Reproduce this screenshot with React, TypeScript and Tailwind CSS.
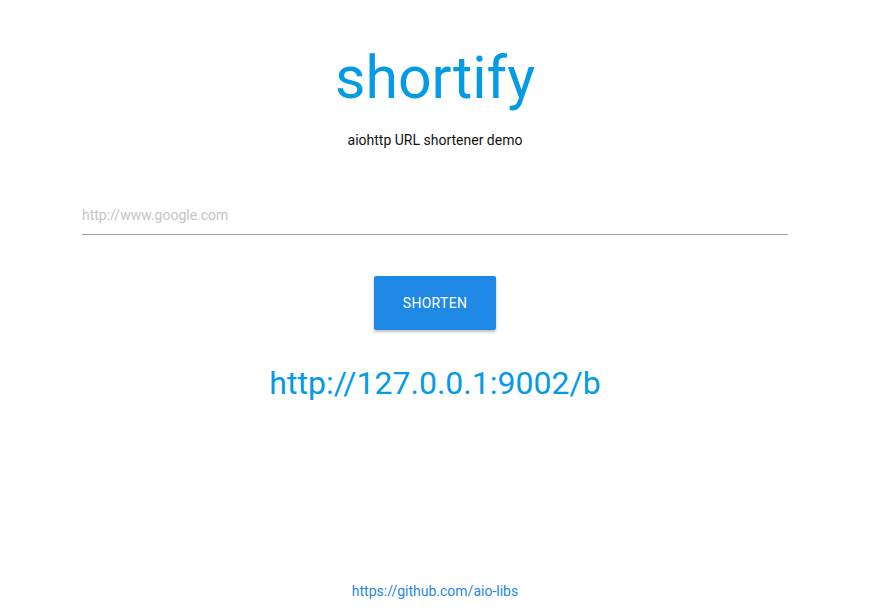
export default function App() {
  return (
    <div
      className="min-h-screen flex flex-col items-center bg-white"
      style={{ fontFamily: 'Roboto, "Liberation Sans", sans-serif' }}
    >
      <main className="w-full flex flex-col items-center pt-[42px]">
        <h1 className="text-[59px] leading-[72px] font-normal text-[#039be5]">shortify</h1>
        <p className="mt-4 text-[14px] leading-5 text-[#111]">aiohttp URL shortener demo</p>

        <form className="w-[706px] mt-[45px]" onSubmit={(e) => e.preventDefault()}>
          <input
            type="text"
            placeholder="http://www.google.com"
            className="w-full h-[40px] border-b border-[#9e9e9e] bg-transparent text-[14px] text-[#212121] placeholder:text-[#c4c4c4] outline-none"
          />
          <div className="flex justify-center mt-[41px]">
            <button
              type="submit"
              className="w-[122px] h-[54px] rounded-[2px] bg-[#1e88e5] text-white text-[14px] tracking-[0.3px] uppercase shadow-[0_2px_3px_rgba(0,0,0,0.25)]"
            >
              Shorten
            </button>
          </div>
        </form>

        <a href="#" className="mt-[33px] text-[32px] leading-[40px] text-[#039be5]">
          http://127.0.0.1:9002/b
        </a>
      </main>

      <footer className="mt-auto pb-[7px]">
        <a href="#" className="text-[14px] leading-5 text-[#1e88e5]">
          https://github.com/aio-libs
        </a>
      </footer>
    </div>
  );
}
